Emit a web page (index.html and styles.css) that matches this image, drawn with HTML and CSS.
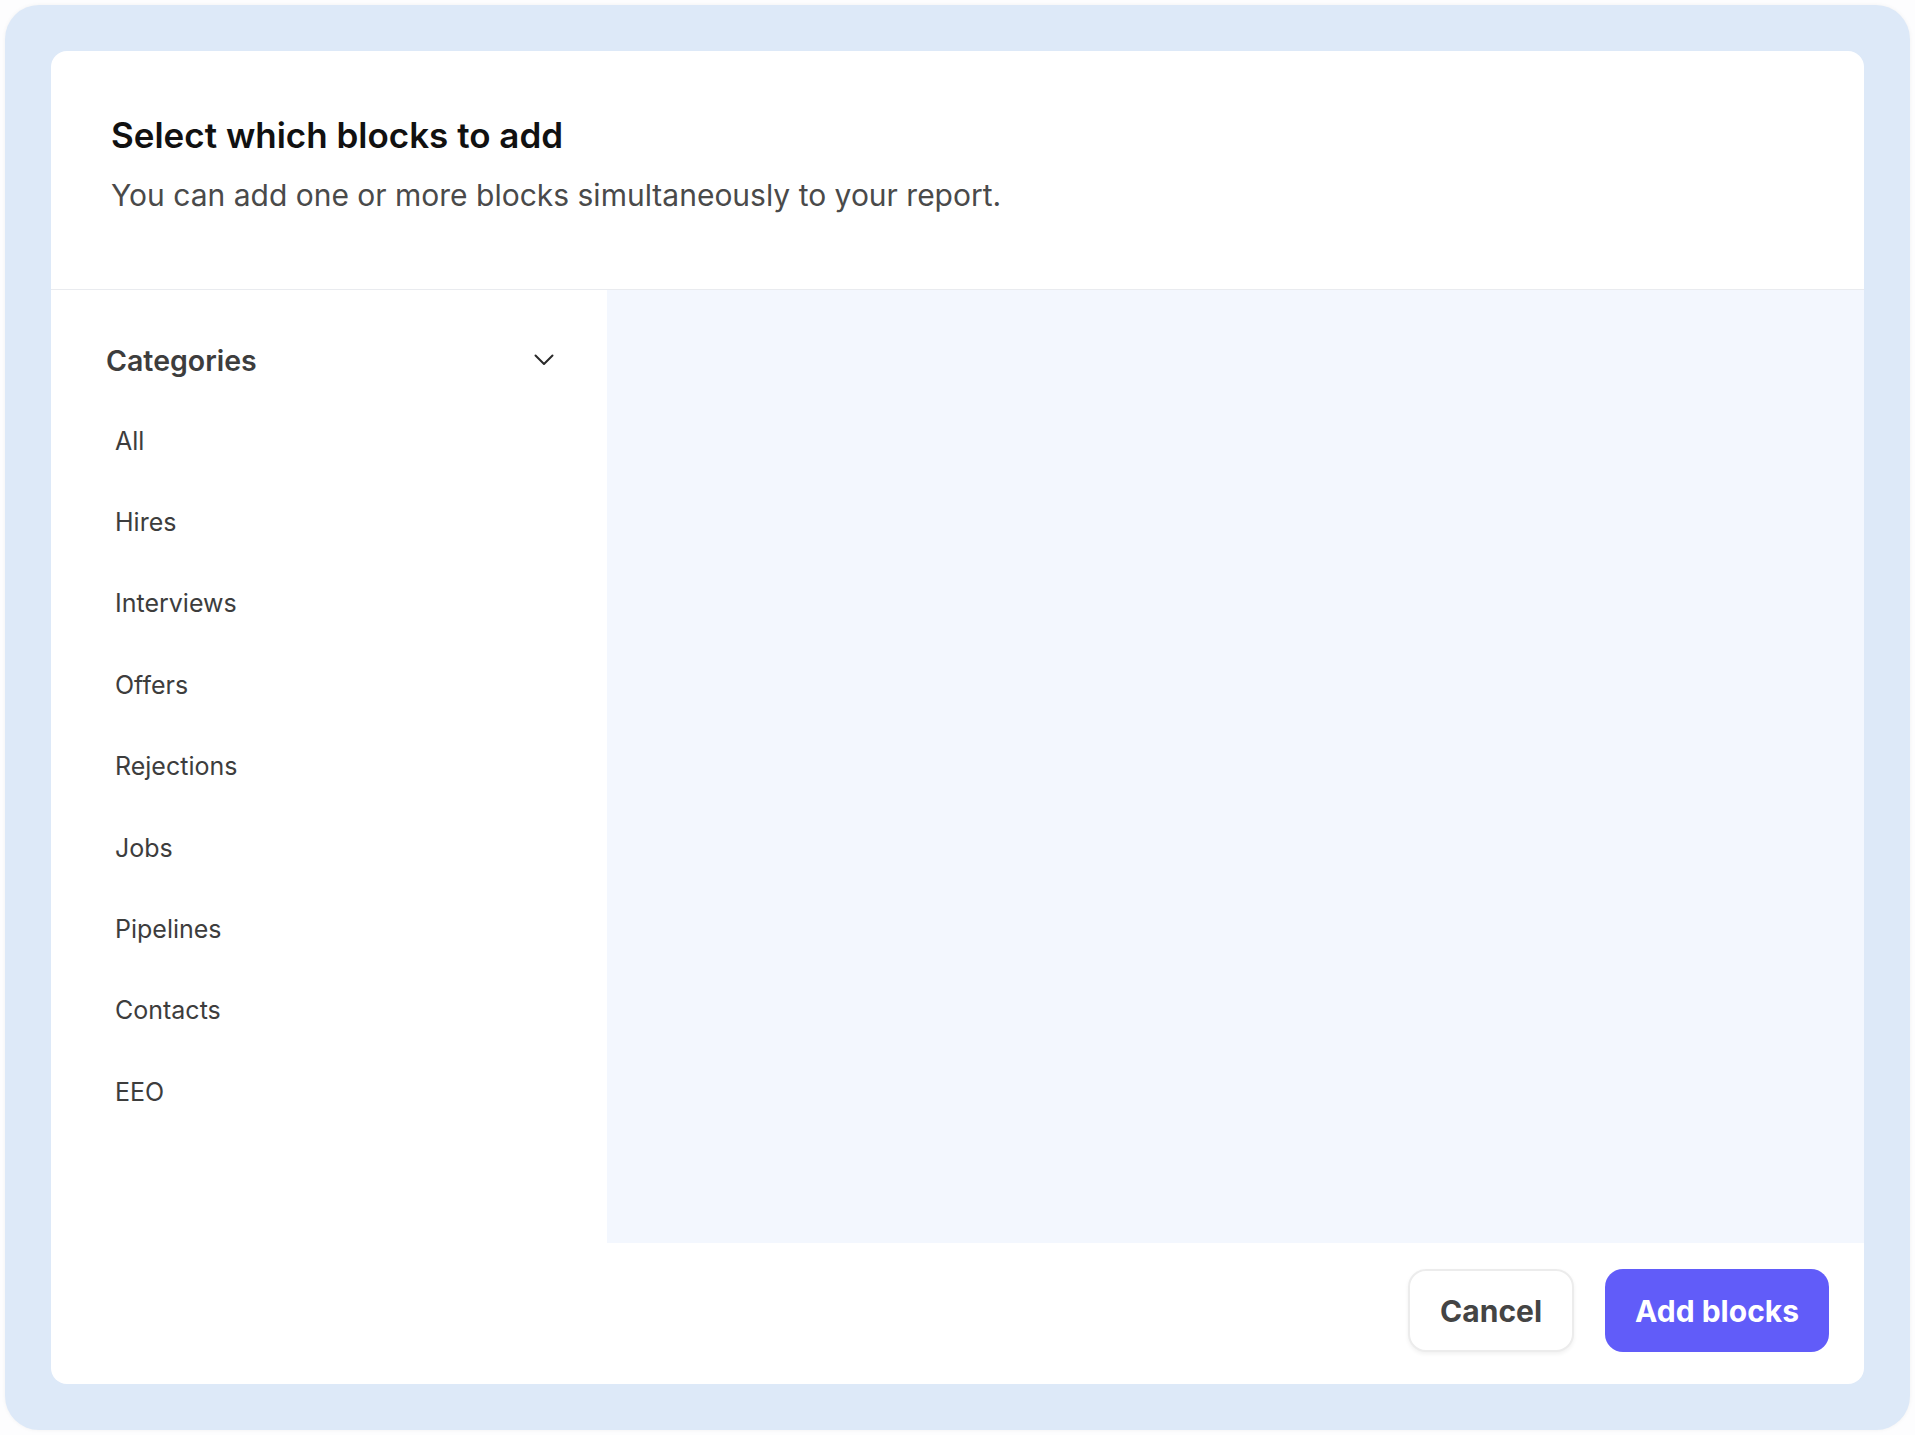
FILE: index.html
```html
<!DOCTYPE html>
<html lang="en">
<head>
    <meta charset="UTF-8">
    <meta name="viewport" content="width=device-width, initial-scale=1.0">
    <title>Add blocks</title>
    <link rel="stylesheet" href="styles.css">
</head>
<body>

<div class="frame">
    <div class="modal">
        <div class="modal-header">
            <h1>Select which blocks to add</h1>
            <p>You can add one or more blocks simultaneously to your report.</p>
        </div>

        <div class="modal-body">
            <div class="sidebar">
                <div class="sidebar-title">
                    <span>Categories</span>
                    <svg class="chevron" width="20" height="12" viewBox="0 0 20 12" fill="none" stroke="currentColor" stroke-width="2" stroke-linecap="round" stroke-linejoin="round">
                        <polyline points="1.5 1.5 10 10 18.5 1.5"></polyline>
                    </svg>
                </div>
                <ul class="category-list">
                    <li>All</li>
                    <li>Hires</li>
                    <li>Interviews</li>
                    <li>Offers</li>
                    <li>Rejections</li>
                    <li>Jobs</li>
                    <li>Pipelines</li>
                    <li>Contacts</li>
                    <li>EEO</li>
                </ul>
            </div>
            <div class="blocks-area"></div>
        </div>

        <div class="modal-footer">
            <button type="button" class="button button-secondary">Cancel</button>
            <button type="button" class="button button-primary">Add blocks</button>
        </div>
    </div>
</div>

</body>
</html>
```

FILE: styles.css
```css
body {
    font-family: Inter, "Noto Sans", Arial, sans-serif;
    background-color: #fdfdfe;
    margin: 0;
    padding: 5px;
}
.frame {
    height: 1425px;
    padding: 46px;
    box-sizing: border-box;
    background: #dde9f8;
    border-radius: 34px;
    box-shadow: 0 0 4px rgba(0, 0, 0, 0.05);
}
.modal {
    height: 100%;
    background: white;
    border-radius: 16px;
    display: flex;
    flex-direction: column;
    overflow: hidden;
}
.modal-header {
    height: 239px;
    box-sizing: border-box;
    padding: 63px 60px 0;
    border-bottom: 1px solid #e9ebef;
}
.modal-header h1 {
    margin: 0;
    font-size: 35px;
    line-height: 42px;
    font-weight: 600;
    color: #111;
}
.modal-header p {
    margin: 21px 0 0;
    font-size: 30px;
    line-height: 36px;
    color: #4a4a4a;
}
.modal-body {
    flex: 1;
    display: flex;
}
.sidebar {
    width: 556px;
    box-sizing: border-box;
    padding: 50px 53px 0 55px;
}
.sidebar-title {
    display: flex;
    align-items: center;
    justify-content: space-between;
    height: 40px;
    font-size: 28.5px;
    font-weight: 600;
    color: #3d3d3d;
}
.chevron {
    color: #2a2a2a;
}
.category-list {
    list-style: none;
    margin: 20px 0 0;
    padding: 0 0 0 9px;
}
.category-list li {
    height: 81.4px;
    display: flex;
    align-items: center;
    font-size: 25px;
    color: #3d3d3d;
}
.blocks-area {
    flex: 1;
    background: #f3f7fe;
}
.modal-footer {
    height: 141px;
    box-sizing: border-box;
    padding: 26px 35px 32px;
    display: flex;
    justify-content: flex-end;
    gap: 31px;
}
.button {
    height: 83px;
    padding: 0 30px;
    border-radius: 18px;
    font-family: inherit;
    font-size: 30px;
    font-weight: 700;
    cursor: pointer;
}
.button-secondary {
    background: white;
    color: #444;
    border: 2px solid #ececec;
    box-shadow: 0 2px 4px rgba(0, 0, 0, 0.06);
}
.button-primary {
    background: #615cf9;
    color: white;
    border: none;
}
.button-primary:hover {
    background: #534ee8;
}
```
